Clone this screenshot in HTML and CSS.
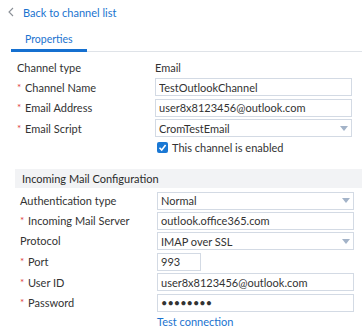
FILE: index.html
```html
<!DOCTYPE html>
<html lang="en">
  <head>
    <meta charset="UTF-8" />
    <meta name="viewport" content="width=device-width, initial-scale=1.0" />
    <title>Channel properties</title>
    <link rel="stylesheet" href="styles.css">
  </head>
  <body>
    <a class="back" href="#">
      <svg class="chevron" width="6" height="10" viewBox="0 0 6 10">
        <polyline points="5,1 1,5 5,9" />
      </svg>
      Back to channel list
    </a>

    <div class="tabs">
      <span class="tab active">Properties</span>
    </div>

    <div class="form top">
      <span class="label">Channel type</span>
      <span class="value">Email</span>

      <label class="label"><i class="req">*</i>Channel Name</label>
      <input class="field" type="text" value="TestOutlookChannel" />

      <label class="label"><i class="req">*</i>Email Address</label>
      <input class="field" type="text" value="user8x8123456@outlook.com" />

      <label class="label"><i class="req">*</i>Email Script</label>
      <div class="field select">
        <span>CromTestEmail</span>
        <svg class="arrow" width="8" height="5" viewBox="0 0 8 5"><polygon points="0,0 8,0 4,5" /></svg>
      </div>

      <span></span>
      <label class="check">
        <span class="box">
          <svg width="9" height="9" viewBox="0 0 9 9"><polyline points="1.5,4.8 3.7,7 7.6,2" /></svg>
        </span>
        This channel is enabled
      </label>
    </div>

    <div class="section">Incoming Mail Configuration</div>

    <div class="form bottom">
      <span class="label">Authentication type</span>
      <div class="field select">
        <span>Normal</span>
        <svg class="arrow" width="8" height="5" viewBox="0 0 8 5"><polygon points="0,0 8,0 4,5" /></svg>
      </div>

      <label class="label"><i class="req">*</i>Incoming Mail Server</label>
      <input class="field" type="text" value="outlook.office365.com" />

      <span class="label">Protocol</span>
      <div class="field select">
        <span>IMAP over SSL</span>
        <svg class="arrow" width="8" height="5" viewBox="0 0 8 5"><polygon points="0,0 8,0 4,5" /></svg>
      </div>

      <label class="label"><i class="req">*</i>Port</label>
      <input class="field port" type="text" value="993" />

      <label class="label"><i class="req">*</i>User ID</label>
      <input class="field" type="text" value="user8x8123456@outlook.com" />

      <label class="label"><i class="req">*</i>Password</label>
      <input class="field" type="password" value="password" />

      <span></span>
      <a class="link" href="#">Test connection</a>
    </div>
  </body>
</html>
```

FILE: styles.css
```css
body {
  margin: 0;
  font-family: Lato, "Open Sans", sans-serif;
  font-size: 11px;
  color: #333;
  background: #fff;
}

.back {
  display: flex;
  align-items: center;
  height: 24px;
  padding-left: 8px;
  color: #1a73cf;
  font-size: 11px;
  text-decoration: none;
}
.back .chevron {
  margin-right: 9px;
}
.back .chevron polyline {
  fill: none;
  stroke: #8a8f96;
  stroke-width: 1.1;
}

.tabs {
  display: flex;
  height: 24px;
  margin: 3px 0 0 11px;
  border-bottom: 1px solid #dfe3e8;
}
.tab {
  box-sizing: border-box;
  height: 25px;
  margin-bottom: -1px;
  padding: 2px 14px 0;
  line-height: 20px;
  font-size: 10.5px;
  color: #1a73cf;
}
.tab.active {
  border-bottom: 3px solid #1570d0;
}

.form {
  display: grid;
  align-items: center;
  row-gap: 2.4px;
}
.form.top {
  grid-template-columns: 138px 1fr;
  padding: 8px 10px 0 17px;
}
.form.bottom {
  grid-template-columns: 137px 1fr;
  padding: 4px 8px 0 20px;
}

.label,
.value {
  line-height: 16px;
}
.req {
  display: inline-block;
  width: 8px;
  font-style: normal;
  color: #e03c3c;
  font-size: 10px;
  vertical-align: 1px;
}

.field {
  box-sizing: border-box;
  height: 18px;
  width: 100%;
  margin: 0;
  padding: 0 3px;
  border: 1px solid #d3dae4;
  border-radius: 0;
  font-family: inherit;
  font-size: 11px;
  color: #333;
  background: #fff;
  outline: none;
}
.field.port {
  width: 44px;
}
.select {
  display: flex;
  align-items: center;
  justify-content: space-between;
  padding-right: 3px;
}
.select .arrow polygon {
  fill: #a3b3c8;
}

.check {
  display: flex;
  align-items: center;
  gap: 4px;
  height: 16px;
  margin-left: 2px;
}
.check .box {
  display: flex;
  align-items: center;
  justify-content: center;
  width: 11px;
  height: 11px;
  border-radius: 2px;
  background: #1a78d4;
}
.check .box polyline {
  fill: none;
  stroke: #fff;
  stroke-width: 1.6;
}

.section {
  height: 19px;
  margin: 13px 0 0 15px;
  padding-left: 7px;
  line-height: 19px;
  background: #f2f3f5;
  color: #2b2b2b;
}

.link {
  line-height: 16px;
  color: #1a73cf;
  text-decoration: none;
}
```
